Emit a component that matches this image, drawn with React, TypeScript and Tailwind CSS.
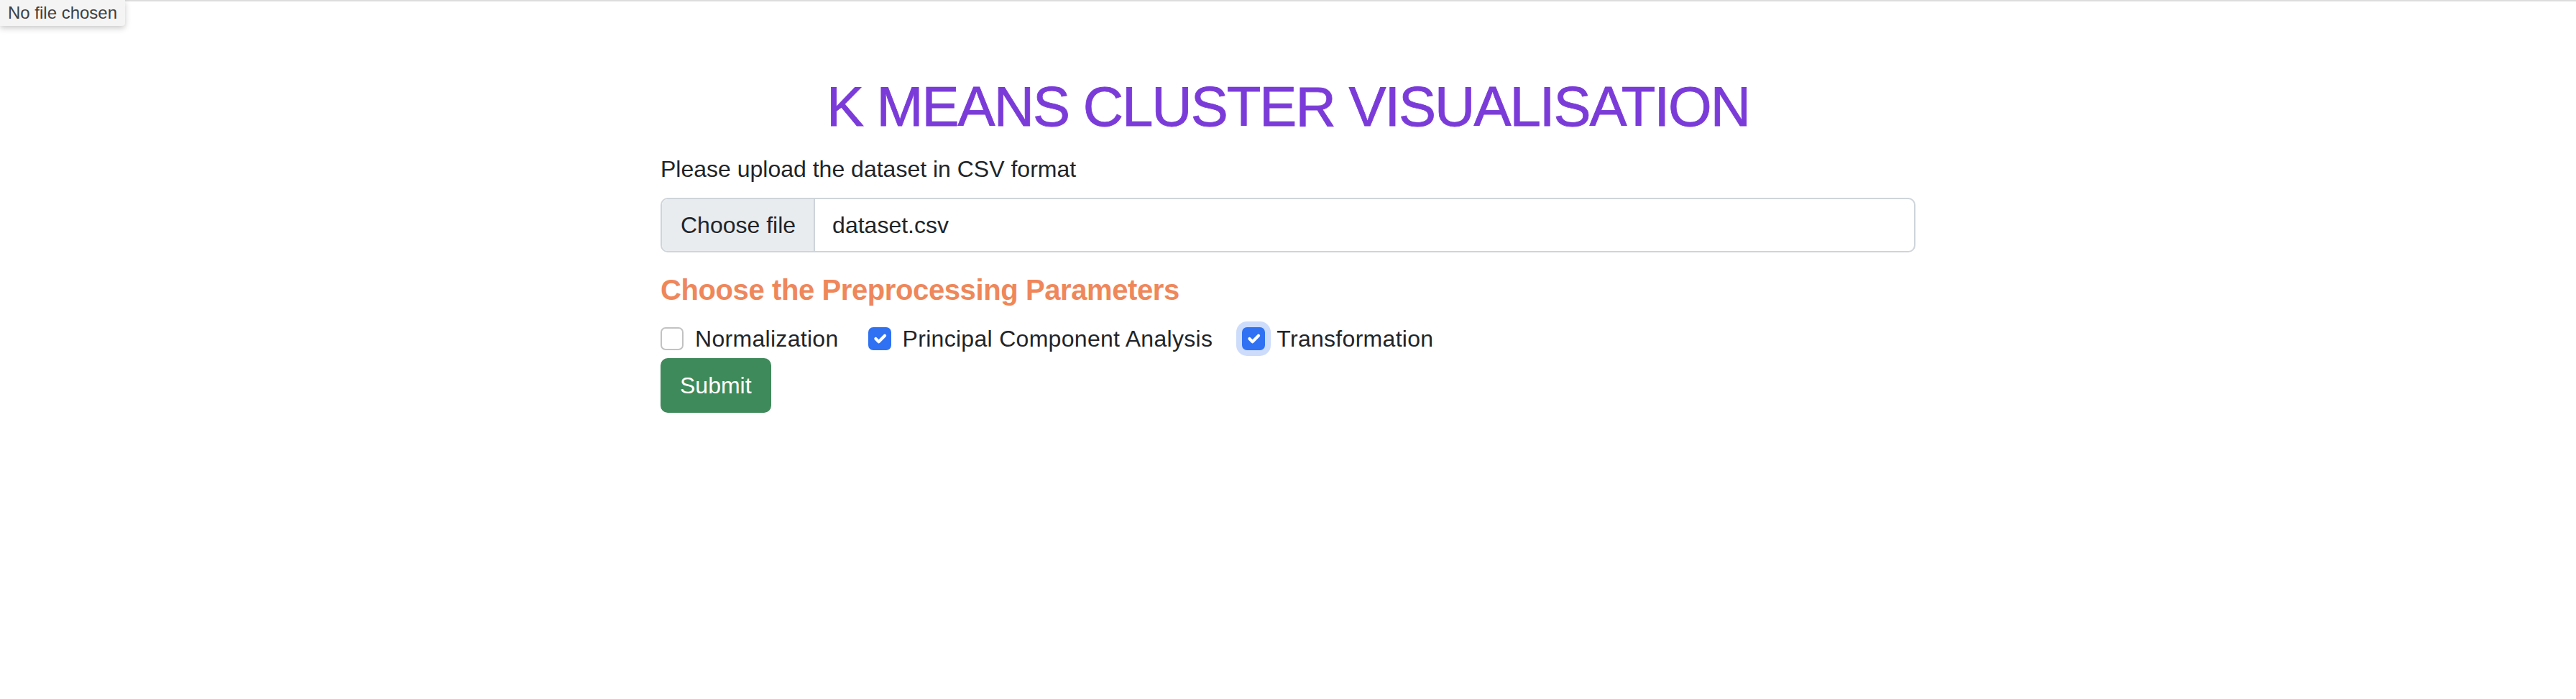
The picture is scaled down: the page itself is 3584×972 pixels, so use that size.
import React from "react";

const CheckMark = () => (
  <svg viewBox="0 0 20 20" className="h-[30px] w-[30px]" fill="none">
    <path d="m6 10 3 3 6-6" stroke="#fff" strokeWidth="3" strokeLinecap="round" strokeLinejoin="round" />
  </svg>
);

const Check = ({ label, checked, focused }: { label: string; checked?: boolean; focused?: boolean }) => (
  <label className="flex items-center h-[48px]">
    <span
      className={
        "flex h-[32px] w-[32px] items-center justify-center rounded-[7px] border-2 " +
        (checked ? "border-[#2f71f2] bg-[#2f71f2] " : "border-[#c2c2c2] bg-white ") +
        (focused ? "shadow-[0_0_0_8px_#cddcfb]" : "")
      }
    >
      {checked && <CheckMark />}
    </span>
    <span className="ml-[16px] text-[32px] leading-[48px] tracking-[0.3px] text-[#212529]">{label}</span>
  </label>
);

export default function App() {
  return (
    <div className="relative min-h-screen bg-white border-t-2 border-[#dcdcdc] font-['Liberation_Sans',Arial,sans-serif]">
      {/* native file-input tooltip */}
      <div className="absolute -top-[2px] left-0 z-10 flex h-[36px] w-[174px] items-center justify-center rounded-br-[4px] bg-[#f4f4f4] text-[24px] text-[#404040] shadow-[0_3px_8px_rgba(0,0,0,0.22)]">
        No file chosen
      </div>

      <div className="mx-auto w-[1746px] pt-[98px]">
        <h1 className="text-center text-[78px] leading-[96px] tracking-[-2px] text-[#7b3bd9] [-webkit-text-stroke:0.8px_#7b3bd9]">
          K MEANS CLUSTER VISUALISATION
        </h1>

        <p className="mt-[15px] text-[32px] leading-[48px] text-[#212529]">Please upload the dataset in CSV format</p>

        <div className="mt-[16px] flex h-[76px] overflow-hidden rounded-[10px] border-2 border-[#ced4da] text-[32px] text-[#212529]">
          <div className="flex items-center border-r-2 border-[#ced4da] bg-[#e9ecef] pl-[26px] pr-[25px]">Choose file</div>
          <div className="flex items-center pl-[24px]">dataset.csv</div>
        </div>

        <h5 className="mt-[28px] text-[40px] font-bold leading-[48px] tracking-[-0.4px] text-[#ef875b]">
          Choose the Preprocessing Parameters
        </h5>

        <div className="mt-[20px] flex items-center gap-[41px]">
          <Check label="Normalization" />
          <Check label="Principal Component Analysis" checked />
          <Check label="Transformation" checked focused />
        </div>

        <button className="mt-[3px] h-[76px] rounded-[10px] bg-[#3f8a5a] px-[27px] text-[32px] text-white">Submit</button>
      </div>
    </div>
  );
}
